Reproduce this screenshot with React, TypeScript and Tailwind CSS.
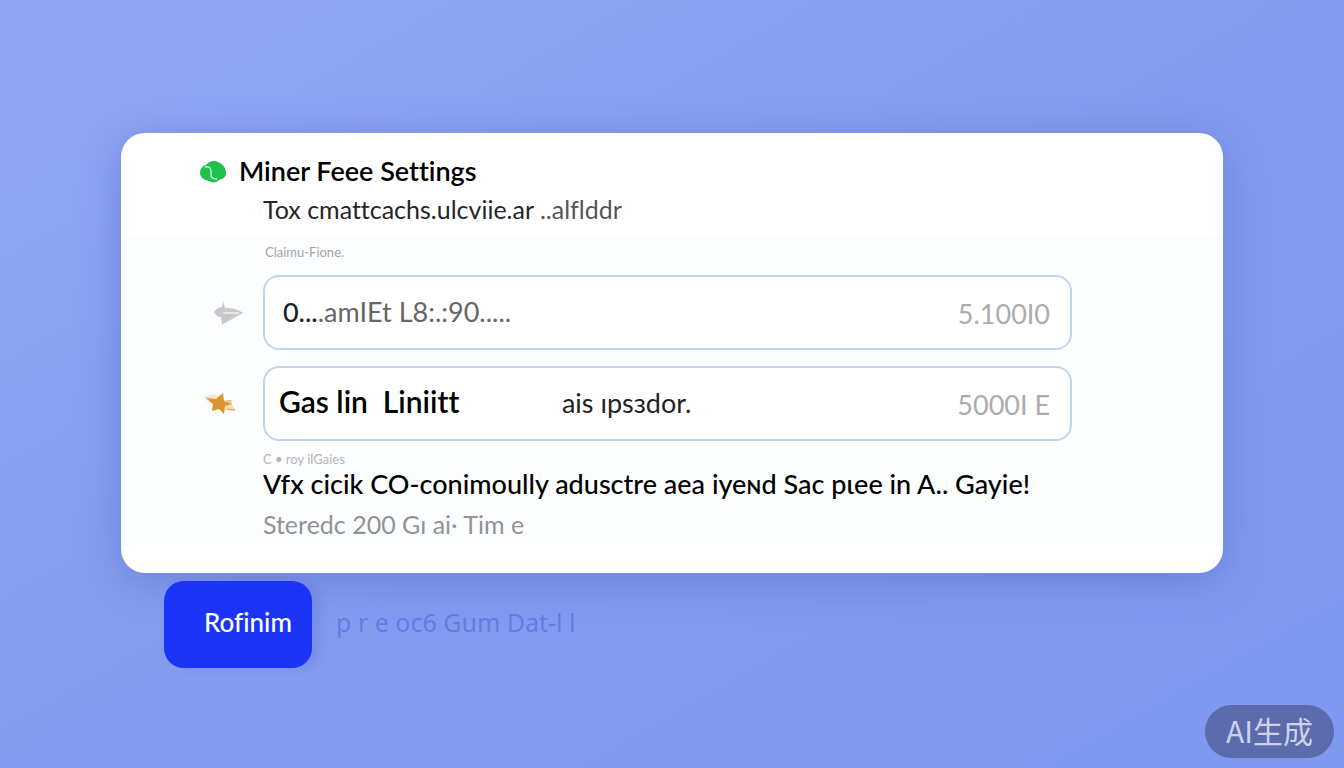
import type { ReactNode } from "react";

function LeafIcon() {
  return (
    <svg viewBox="0 0 28 24" className="h-6 w-7" aria-hidden="true">
      <path
        d="M1 14C1 10 3 7 7 6C10 2 15 1 19 3C24 5 27 9 27 14C27 18 24 20 20 21C18 24 13 24 10 22C5 21 1 18 1 14Z"
        fill="#1fc24e"
      />
      <path
        d="M6 8C10 7 12 9 12 12V16C12 19 14 20 18 20"
        fill="none"
        stroke="#d5f8de"
        strokeWidth="1.3"
      />
    </svg>
  );
}

function ArrowIcon() {
  return (
    <svg viewBox="0 0 32 26" className="h-[26px] w-8" aria-hidden="true">
      <path
        d="M2 12C4 9 7 7 10 7L11 1L13 8C20 8 26 9 31 13C25 17 17 20 10 25L9 17C6 17 3 15 2 12Z"
        fill="#c9c9cb"
      />
      <path d="M11 13L27 13" stroke="#f2f2f3" strokeWidth="1.4" />
    </svg>
  );
}

function StarIcon() {
  return (
    <svg viewBox="0 0 34 26" className="h-[26px] w-[34px]" aria-hidden="true">
      <path d="M1 6L10 3L18 6L16 14L6 12Z" fill="#f7e6cb" />
      <path d="M21 9L29 9L29 14L33 20L22 19Z" fill="#f6dcb5" />
      <path
        d="M3 7L13 8L20 2L21 10L29 13L22 15L21 23L16 18L9 20L10 13Z"
        fill="#dc9433"
      />
      <path d="M24 10L28 10M24 18L32 19" stroke="#e3a552" strokeWidth="1.2" />
    </svg>
  );
}

type FieldProps = {
  id: string;
  icon: ReactNode;
  label: string;
  labelClass: string;
  value: string;
  inputClass: string;
  amount: string;
};

function Field({
  id,
  icon,
  label,
  labelClass,
  value,
  inputClass,
  amount,
}: FieldProps) {
  return (
    <div className="flex items-center">
      <div className="flex w-[142px] shrink-0 justify-end">{icon}</div>
      <div className="flex h-[75px] min-w-0 flex-1 items-center rounded-2xl border-2 border-[#c3d4ea] bg-white pr-5 pl-3.5 text-[27px]">
        <label htmlFor={id} className={labelClass}>
          {label}
        </label>
        <input
          id={id}
          defaultValue={value}
          className={`min-w-0 flex-1 bg-transparent outline-none ${inputClass}`}
        />
        <span className="pt-1 text-[#acacac]">{amount}</span>
      </div>
    </div>
  );
}

export default function App() {
  return (
    <main className="relative min-h-screen bg-linear-to-br from-[#91a6f5] via-[#849cef] to-[#7f98f0] pt-[133px] font-['Lato','Noto_Sans_CJK_SC',sans-serif] text-black [font-variant-ligatures:none]">
      <section className="mx-auto w-[82%] overflow-hidden rounded-3xl bg-white pb-7 shadow-[0_8px_40px_rgba(60,80,170,0.35)]">
        <header className="flex h-[102px] flex-col pt-5">
          <h1 className="flex items-center gap-3 pl-[78px] text-[27px] leading-9 font-semibold">
            <LeafIcon />
            Miner Feee Settings
          </h1>
          <p className="pt-0.5 pl-[142px] text-[25px] leading-9 text-[#262626]">
            Tox cmattcachs.ulcviie.ar{" "}
            <span className="text-[#555]">..alflddr</span>
          </p>
        </header>
        <div className="bg-[#fcfdff] pr-[151px]">
          <p className="flex h-10 items-center pb-1 pl-[144px] text-[13px] text-[#a5a5a5]">
            Claimu-Fione.
          </p>
          <div className="flex flex-col gap-4">
            <Field
              id="price"
              icon={<div className="mr-[19px]"><ArrowIcon /></div>}
              label="0..."
              labelClass="pl-1 font-medium text-[#222]"
              value=".amIEt L8:.:90....."
              inputClass="text-[#666]"
              amount="5.100I0"
            />
            <Field
              id="limit"
              icon={<div className="mr-[26px]"><StarIcon /></div>}
              label="Gas lin  Liniitt"
              labelClass="w-[283px] whitespace-pre pb-1 text-[30px] font-semibold"
              value="ais ıpsɜdor."
              inputClass="text-[#222]"
              amount="5000I E"
            />
          </div>
          <div className="pt-2 pl-[142px]">
            <p className="text-[13px] leading-5 text-[#b4b4b4]">
              C • roy ilGaies
            </p>
            <p className="text-[27px] leading-[30px] font-medium whitespace-nowrap">
              Vfx cicik CO-conimoully adusctre aea iyeɴd Sac pɩee in A.. Gayie!
            </p>
            <p className="pt-1 text-[25px] leading-[42px] text-[#929292]">
              Steredc 200 Gı ai· Tim e
            </p>
          </div>
        </div>
      </section>
      <div className="mt-2 flex items-center pl-[164px]">
        <button
          type="button"
          className="h-[87px] w-[148px] rounded-[20px] bg-[#1c34f8] pb-1 pl-5 text-[26px] font-medium text-white shadow-[8px_0_8px_rgba(90,110,220,0.3)]"
        >
          Rofinim
        </button>
        <a
          href="#details"
          className="pb-1 pl-6 font-['Noto_Sans',sans-serif] text-[25px] text-[#637be6]"
        >
          p r e oc6 Gum Dat-l l
        </a>
      </div>
      <div className="absolute right-[10px] bottom-[10px] flex h-[53px] w-[129px] items-center justify-center rounded-full bg-[#5b6bab] pb-0.5 font-['Noto_Sans_CJK_SC',sans-serif] text-[30px] text-[#ccd2ec]">
        AI生成
      </div>
    </main>
  );
}
